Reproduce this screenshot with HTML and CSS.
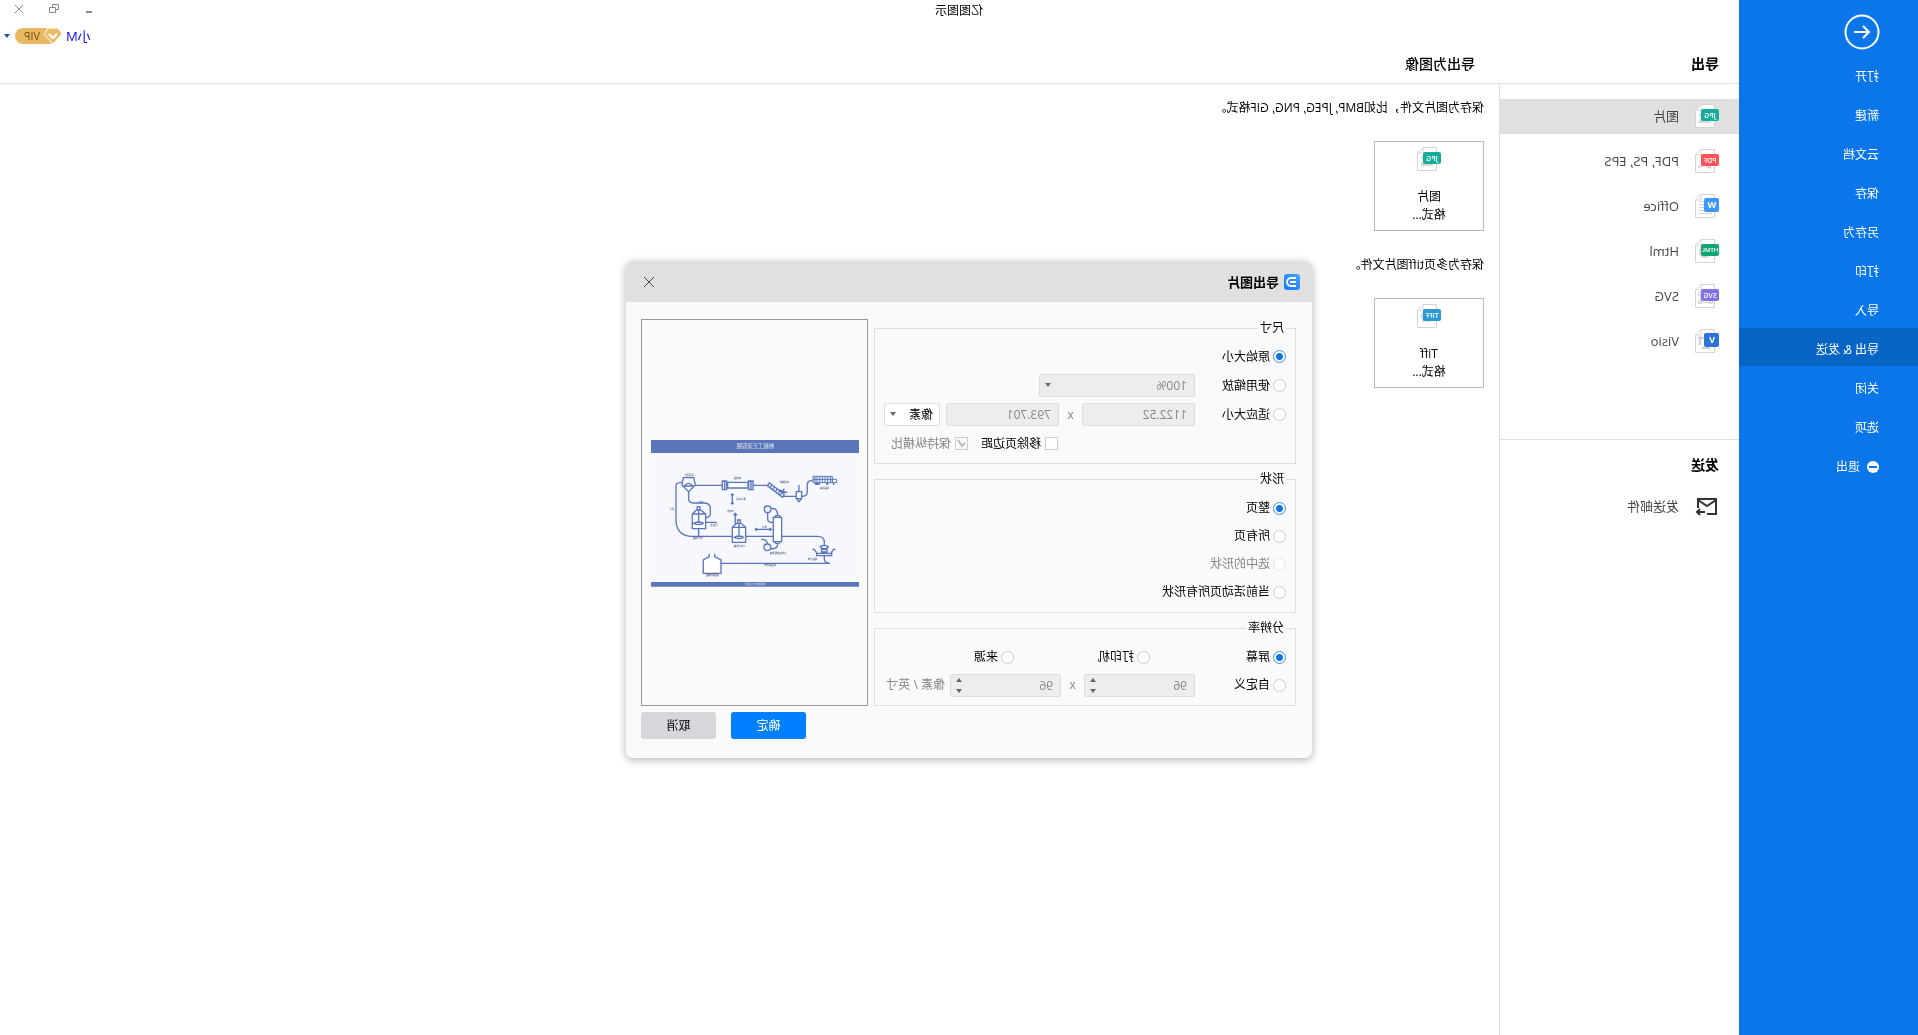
FILE: index.html
```html
<!DOCTYPE html>
<html lang="zh-CN">
<head>
<meta charset="utf-8">
<title>亿图图示</title>
<link rel="stylesheet" href="styles.css">
</head>
<body>
<svg class="defs" aria-hidden="true">
  <symbol id="sheet" viewBox="0 0 24 24">
    <path d="M4.500 .5H18l5.500 5.500V23.500H4.500Z" fill="#fff" stroke="#d4d4d4"/>
    <path d="M18 .5V6h5.500" fill="none" stroke="#d4d4d4"/>
  </symbol>
  <symbol id="jpg" viewBox="0 0 24 24">
    <use href="#sheet"/><path d="M7 19l6-6 4 3 2-2 2 5Z" fill="#d8d8d8"/><circle cx="18" cy="11" r="2" fill="#d8d8d8"/>
    <rect y="5" width="18" height="12" rx="2" fill="#16ab9c"/>
  </symbol>
</svg>
<div class="app">
  <nav class="side">
    <button class="back" aria-label="返回">
      <svg width="36" height="36" viewBox="0 0 36 36" fill="none" stroke="#fff" stroke-width="2"><circle cx="18" cy="18" r="16.500"/><path d="M26 18H11M17 12l-6 6 6 6"/></svg>
    </button>
    <a href="#">打开</a>
    <a href="#">新建</a>
    <a href="#">云文档</a>
    <a href="#">保存</a>
    <a href="#">另存为</a>
    <a href="#">打印</a>
    <a href="#">导入</a>
    <a href="#" class="on">导出 &amp; 发送</a>
    <a href="#">关闭</a>
    <a href="#">选项</a>
    <a href="#"><svg width="12" height="12" viewBox="0 0 12 12"><circle cx="6" cy="6" r="6" fill="#fff"/><path d="M2 6h8" stroke="#0a76ea" stroke-width="2"/></svg>退出</a>
  </nav>
  <div class="work">
    <header class="head">
      <h1>导出</h1>
      <h2>导出为图像</h2>
      <button class="user">小M
        <svg width="50" height="18" viewBox="0 0 50 18"><path d="M12 1H40a8 8 0 0 1 0 16H12Z" fill="#e9b862"/><path d="M5 1H15L19 7 10 17 1 7Z" fill="#ecbc68" stroke="#fff"/><path d="M6 7l4 4 4-4" fill="none" stroke="#fff" stroke-width="2"/><text class="vip" x="31" y="13">VIP</text></svg>
        <span class="caret"></span>
      </button>
    </header>
    <aside class="list">
      <a href="#" class="on"><svg width="24" height="24" viewBox="0 0 24 24"><use href="#jpg"/><text class="tag" x="9" y="14">JPG</text></svg>图片</a>
      <a href="#"><svg width="24" height="24" viewBox="0 0 24 24"><use href="#sheet"/><path d="M7 18l7-3 7 2v2l-7-2-5 3Z" fill="#d0d0d0"/><rect y="5" width="18" height="12" rx="2" fill="#ff5257"/><text class="tag" x="9" y="14">PDF</text></svg>PDF, PS, EPS</a>
      <a href="#"><svg width="24" height="24" viewBox="0 0 24 24"><use href="#sheet"/><path d="M15 7.500h5M15 10.500h5M15 13.500h5M7 16.500h13M7 19.500h13" stroke="#d4d4d4"/><rect y="4" width="15" height="14" rx="2" fill="#3d97fd"/><text class="tag big" x="7" y="14">W</text></svg>Office</a>
      <a href="#"><svg width="24" height="24" viewBox="0 0 24 24"><use href="#sheet"/><circle cx="14" cy="13" r="6" fill="#d4d4d4"/><rect y="5" width="18" height="12" rx="2" fill="#14a474"/><text class="tag small" x="9" y="13">HTML</text></svg>Html</a>
      <a href="#"><svg width="24" height="24" viewBox="0 0 24 24"><use href="#sheet"/><path d="M8.500 9.500h10v9h-10Z M6.500 16.500h3v3h-3Z M17.500 16.500h3v3h-3Z M17.500 8.500h3v3h-3Z" fill="#fff" stroke="#d4d4d4"/><rect y="5" width="18" height="12" rx="2" fill="#8370e6"/><text class="tag" x="9" y="14">SVG</text></svg>SVG</a>
      <a href="#"><svg width="24" height="24" viewBox="0 0 24 24"><use href="#sheet"/><path d="M15 9h3M19 11v5M9 19h8" stroke="#d0d0d0" stroke-width="2"/><circle cx="19" cy="9" r="2" fill="#d0d0d0"/><rect y="4" width="15" height="14" rx="2" fill="#2c72d8"/><text class="tag big" x="7" y="14">V</text></svg>Visio</a>
      <h3>发送</h3>
      <a href="#"><svg width="24" height="24" viewBox="0 0 24 24" fill="none" stroke="#333" stroke-width="2"><path d="M12 20H3V5H21V14M3 6l9 6 9-6M14 18h8M19 15l3 3-3 3"/></svg>发送邮件</a>
    </aside>
    <main class="main">
      <p>保存为图片文件，比如BMP, JPEG, PNG, GIF格式。</p>
      <button class="card"><svg width="24" height="24" viewBox="0 0 24 24"><use href="#jpg"/><text class="tag" x="9" y="14">JPG</text></svg><span>图片<br>格式...</span></button>
      <p>保存为多页tiff图片文件。</p>
      <button class="card"><svg width="24" height="24" viewBox="0 0 24 24"><use href="#sheet"/><path d="M8 16h3l1 3 3-2 3 2 1-4 2-2-2-4-4-1-7 1Z" fill="#d8d8d8"/><rect y="5" width="18" height="12" rx="2" fill="#2b98d6"/><text class="tag" x="9" y="14">TIFF</text></svg><span>Tiff<br>格式...</span></button>
    </main>
  </div>

  <div class="titlebar">
    <span class="name">亿图图示</span>
    <div class="winbtns">
      <button aria-label="最小化"><svg width="10" height="10" viewBox="0 0 10 10"><path d="M2 8h6" stroke="#888" stroke-width="2"/></svg></button>
      <button aria-label="还原"><svg width="10" height="10" viewBox="0 0 10 10" fill="none" stroke="#888"><path d="M3.500 3.500h6v5h-6ZM3.500 5.500h-3v-5h6v3"/></svg></button>
      <button aria-label="关闭"><svg width="10" height="10" viewBox="0 0 10 10" stroke="#888"><path d="M1 1l8 8M9 1L1 9"/></svg></button>
    </div>
  </div>

  <section class="dialog" role="dialog" aria-label="导出图片">
    <div class="dhead">
      <svg width="16" height="16" viewBox="0 0 16 16"><defs><linearGradient id="lg" x1="0" y1="0" x2="1" y2="1"><stop offset="0" stop-color="#41a4ff"/><stop offset="1" stop-color="#1677f5"/></linearGradient></defs><rect width="16" height="16" rx="3" fill="url(#lg)"/><path d="M4 4H9a4 4 0 0 1 0 8H4M4 8h6" fill="none" stroke="#fff" stroke-width="2"/></svg>
      <h2>导出图片</h2>
      <button aria-label="关闭"><svg width="12" height="12" viewBox="0 0 12 12" stroke="#444"><path d="M1 1l10 10M11 1L1 11"/></svg></button>
    </div>
    <form class="dbody">
      <div class="groups">
        <fieldset class="size">
          <legend>尺寸</legend>
          <div class="row"><label><input type="radio" name="size" checked>原始大小</label></div>
          <div class="row"><label class="lead"><input type="radio" name="size">使用缩放</label>
            <span class="pick zoom"><select disabled aria-label="缩放比例"><option>100%</option></select></span></div>
          <div class="row"><label class="lead"><input type="radio" name="size">适应大小</label>
            <input class="num" type="text" value="1122.52" disabled aria-label="宽度"><span class="by">x</span><input class="num" type="text" value="793.701" disabled aria-label="高度">
            <span class="pick unit"><select aria-label="单位"><option>像素</option></select></span></div>
          <div class="row checks"><label><input type="checkbox">移除页边距</label><label class="off"><input type="checkbox" checked disabled>保持纵横比</label></div>
        </fieldset>
        <fieldset>
          <legend>形状</legend>
          <div class="row"><label><input type="radio" name="shape" checked>整页</label></div>
          <div class="row"><label><input type="radio" name="shape">所有页</label></div>
          <div class="row"><label class="off"><input type="radio" name="shape" disabled>选中的形状</label></div>
          <div class="row"><label><input type="radio" name="shape">当前活动页所有形状</label></div>
        </fieldset>
        <fieldset>
          <legend>分辨率</legend>
          <div class="row thirds"><label><input type="radio" name="res" checked>屏幕</label><label><input type="radio" name="res">打印机</label><label><input type="radio" name="res">来源</label></div>
          <div class="row"><label class="lead"><input type="radio" name="res">自定义</label>
            <span class="spin"><input type="text" value="96" disabled aria-label="水平分辨率"></span><span class="by">x</span><span class="spin"><input type="text" value="96" disabled aria-label="垂直分辨率"></span><span class="per">像素 / 英寸</span></div>
        </fieldset>
      </div>
      <div class="preview">
        <svg viewBox="0 0 624 440" fill="none" stroke="#5b75ba" stroke-width="4">
          <rect width="624" height="440" fill="#f6f8fd" stroke="none"/>
          <path d="M0 0H624V39H0ZM0 426H624V440H0Z" fill="#5b75ba" stroke="none"/>
          <path d="M527 113H496L491 135 511 155 531 135ZM498 138q13-16 26 0Z" fill="#fff"/>
          <path d="M491 136H410M318 136H272M227 169H189M172 169C160 169 155 164 155 155V135Q155 122 142 122H138M531 127C549 127 549 132 549 145V240C549 272 530 289 500 289H380M511 155V175Q511 189 497 189H465Q446 189 446 205V220Q446 233 460 233M460 247H427M481 266V289M371 255V220M366 226l5-6 5 6M380 162V192M376 166l4-4 4 4M376 188l4 4 4-4M263 268H311M268 264l-5 4 5 4M306 264l5 4-5 4M340 289H257M232 289H124Q104 289 104 307V317M104 347V355Q104 370 88 370"/>
          <path d="M88 370H414"/>
          <path d="M397 123h13v26h-13ZM318 123h13v26h-13ZM333 127h61v17h-61ZM403 123v26M324 123v26" fill="#fff"/>
          <path d="M269 128L224 163 229 172 274 138ZM262 134l4 9M254 140l4 9M246 146l4 9M238 152l4 9M224 146l14 22M241 150l-26 8"/>
          <path d="M172 155h16v21h-16ZM173 177l7 8 7-8M180 135v20" fill="#fff"/>
          <path d="M80 109h58v19H80ZM80 118H67v10H80ZM86 109v19M94 109v19M102 109v19M110 109v19M118 109v19M126 109v19M132 109v19M80 118h58" stroke-width="3"/>
          <path d="M74 132h4M92 132h6M118 132h14" stroke-width="6"/>
          <path d="M460 222L475 210H487L500 222V266H460ZM477 200h8v10h-8ZM481 208V250M466 250q15-8 30 0-15 8-30 0M460 222h40" fill="#fff"/>
          <path d="M340 262L354 250H366L380 262V307H340ZM356 240h8v10h-8ZM360 248V292M346 292q14-8 28 0-14 8-28 0M340 262h40" fill="#fff"/>
          <path d="M232 232h25v73h-25ZM235 232q2-6 9-6t10 6M235 305q2 6 9 6t10-6" fill="#fff"/>
          <path d="M264 206q-20-4-20 20M274 218v18q0 12-17 12M266 326q-22 2-22-14M275 312q0-14 18-14"/>
          <circle cx="274" cy="208" r="10"/><circle cx="275" cy="322" r="10"/>
          <path d="M140 328h-6l-8 12H84l-7-12H70M127 338v9H82v-9M96 336v-8h16v8ZM92 320q12-8 24 0-4 8-12 6-8 2-12-6Z"/>
          <path d="M433 341V350L414 360V400H467V360L449 350V341" fill="#fff"/>
          <g class="notes" stroke="none">
            <text class="caption" x="311" y="24">制糖工艺流程图</text>
            <text x="510" y="108">甘蔗压榨</text><text x="364" y="116">加热器</text><text x="225" y="129">输送破碎</text><text x="103" y="147">甘蔗运输</text>
            <text x="354" y="180">蒸汽冷凝</text><text x="474" y="190">清汁</text><text x="386" y="216">石灰乳</text><text x="561" y="210">滤汁</text>
            <text x="435" y="258">压缩空</text><text x="480" y="297">一次澄清罐</text><text x="358" y="321">二次澄清罐</text><text x="284" y="263">蒸汽</text>
            <text x="242" y="342">多效真空蒸发罐</text><text x="139" y="360">结晶分离</text><text x="266" y="378">成品输送管</text><text x="440" y="408">成品储存罐区</text>
            <text class="foot" x="311" y="436">流程图制作 亿图图示</text>
          </g>
        </svg>
      </div>
      <div class="actions"><button type="button" class="ok">确定</button><button type="button">取消</button></div>
    </form>
  </section>
</div>
</body>
</html>
```
FILE: styles.css
```css
* { box-sizing: border-box; }

html, body { height: 100%; margin: 0; background: #fff; }

body, button, input, select {
  font-family: "Open Sans", "Noto Sans CJK SC", sans-serif;
  font-size: 12px;
  line-height: 18px;
  color: #000;
}

button { padding: 0; border: 0; background: none; }
svg { display: block; flex: none; }
a { color: inherit; text-decoration: none; }
h1, h2, h3, p { margin: 0; font-size: 14px; }
.defs { position: absolute; width: 0; height: 0; }

/* the whole interface is mirrored left to right */
.app {
  position: relative;
  display: flex;
  min-height: 100%;
  overflow: hidden;
  transform: scaleX(-1);
}

/* sidebar */
.side {
  flex: none;
  width: 179px;
  display: flex;
  flex-direction: column;
  gap: 1px;
  padding-top: 14px;
  background: #0a76ea;
  color: #fff;
}
.back { width: 36px; margin: 0 0 4px 38px; }
.side a {
  display: flex;
  align-items: center;
  gap: 7px;
  height: 38px;
  padding: 5px 0 0 39px;
  color: #fff;
}
.side .on { background: #0865c6; }

/* work area */
.work {
  flex: 1;
  display: grid;
  grid-template: 84px 1fr / 240px 1fr;
}
.head {
  grid-column: 1 / -1;
  display: grid;
  grid-template-columns: 244px 1fr auto;
  align-items: end;
  padding: 0 4px 10px 20px;
  border-bottom: 1px solid #dfdfdf;
}
.head h2 { font-weight: 500; }
.user {
  display: flex;
  align-items: center;
  align-self: start;
  gap: 3px;
  height: 18px;
  margin-top: 27px;
  color: #00f;
  font-size: 13px;
}
.caret { border: 3px solid transparent; border-top: 4px solid #0b57b0; border-bottom: 0; }
.vip { font-size: 11px; fill: #7a4f12; text-anchor: middle; }

.list {
  border-right: 1px solid #dfdfdf;
  padding-top: 15px;
  display: flex;
  flex-direction: column;
  gap: 10px;
  font-size: 13px;
  color: #444;
}
.list a { display: flex; align-items: center; gap: 16px; height: 35px; padding: 0 0 2px 20px; }
.list .on { background: #e0e0e0; }
.list h3 {
  height: 40px;
  margin-top: 70px;
  padding: 16px 20px 0;
  border-top: 1px solid #dfdfdf;
  color: #000;
}
.tag {
  font: 600 7px/1 "Open Sans", sans-serif;
  fill: #fff;
  text-anchor: middle;
}
.tag.big { font-size: 9px; font-weight: 700; }
.tag.small { font-size: 6px; }

.main { padding: 15px; }
.main p { font-size: 12px; }
.card {
  display: flex;
  flex-direction: column;
  align-items: center;
  gap: 17px;
  width: 110px;
  height: 90px;
  margin: 24px 0 25px;
  padding-top: 5px;
  border: 1px solid #bbb;
}

/* title bar, drawn over the top of both columns */
.titlebar {
  position: absolute;
  inset: 0 0 auto;
  display: grid;
  grid-template-columns: 1fr auto 1fr;
  align-items: start;
  pointer-events: none;
}
.name { grid-column: 2; padding-top: 2px; }
.winbtns {
  display: flex;
  justify-content: flex-end;
  gap: 25px;
  padding: 4px 14px 0 0;
  pointer-events: auto;
}

/* export dialog */
.dialog {
  position: absolute;
  top: 261px;
  left: 606px;
  width: 686px;
  border-radius: 7px;
  overflow: hidden;
  background: #fafafa;
  box-shadow: 0 2px 8px rgba(0, 0, 0, .3);
}
.dhead {
  display: flex;
  align-items: center;
  gap: 5px;
  height: 41px;
  padding: 0 17px 0 12px;
  background: #e0e0e0;
}
.dhead h2 { flex: 1; font-size: 13px; font-weight: 700; }
.dbody {
  display: grid;
  grid-template-columns: 422px 1fr;
  gap: 6px;
  padding: 17px 15px 19px 16px;
}
.groups { display: grid; gap: 6px; }
fieldset {
  min-width: 0;
  margin: 0;
  padding: 6px 9px;
  border: 1px solid #dfdfdf;
}
legend { margin-left: 0; padding: 0 2px; }
.row { display: flex; align-items: center; height: 28px; }
.size { padding: 5px 9px; }
.size .row { height: 29px; }
label { display: flex; align-items: center; gap: 3px; }
.lead { width: 91px; }
.off, .by, .per { color: #868686; }

input[type="radio"], input[type="checkbox"] {
  appearance: none;
  width: 13px;
  height: 13px;
  margin: 0;
  border: 1px solid #ccc;
  background: #fff;
}
input[type="radio"] { border-radius: 50%; }
input[type="radio"]:checked {
  border-color: #3d8ff0;
  background: radial-gradient(circle, #0a76ea 3px, #fff 4px);
}
input[type="radio"]:disabled { border-color: #e6e6e6; }
input[type="checkbox"]:disabled {
  background: no-repeat center url("data:image/svg+xml,%3Csvg xmlns='http://www.w3.org/2000/svg' width='11' height='11'%3E%3Cpath d='M2 5l3 3 4-6' fill='none' stroke='%23bbb' stroke-width='2'/%3E%3C/svg%3E");
}
.checks { gap: 13px; padding-left: 228px; }
.checks label { gap: 4px; }
.thirds label { flex: 0 0 136px; }
.thirds label:last-child { flex: 1; }

.num, .spin input, select {
  appearance: none;
  height: 23px;
  margin: 0;
  padding: 0 7px;
  border: 1px solid #dcdde0;
  border-radius: 2px;
  background: #fff;
  width: 100%;
}
.row input:disabled, select:disabled { color: #868686; opacity: 1; }
.num:disabled, .spin input:disabled, select:disabled { background: #ededed; }
.row .num { width: 113px; }
.by { width: 23px; text-align: center; }
.pick, .spin { position: relative; display: block; }
.zoom { width: 156px; }
.unit { width: 56px; margin-left: 6px; }
.unit select { padding: 0 6px; }
.spin { width: 111px; }
.per { padding-left: 5px; }
.pick::after, .spin::before, .spin::after {
  content: "";
  position: absolute;
  right: 6px;
  top: 9px;
  border: 3px solid transparent;
  border-top: 4px solid #666;
  border-bottom: 0;
}
.spin::after { top: 15px; }
.spin::before { top: 4px; border-top: 0; border-bottom: 4px solid #666; }

.preview {
  display: grid;
  align-items: center;
  padding: 2px 9px 0 8px;
  border: 1px solid #999;
}
.preview svg { width: 100%; }
.notes text { font-size: 7px; fill: #333a66; text-anchor: middle; }
.notes .caption { font-size: 16px; fill: #dfe4f4; }
.notes .foot { fill: #dfe4f4; }

.actions {
  grid-column: 1 / -1;
  display: flex;
  justify-content: flex-end;
  gap: 15px;
}
.actions button { width: 75px; height: 27px; border-radius: 3px; background: #d5d7db; }
.actions .ok { background: #007fff; color: #fff; }
```
